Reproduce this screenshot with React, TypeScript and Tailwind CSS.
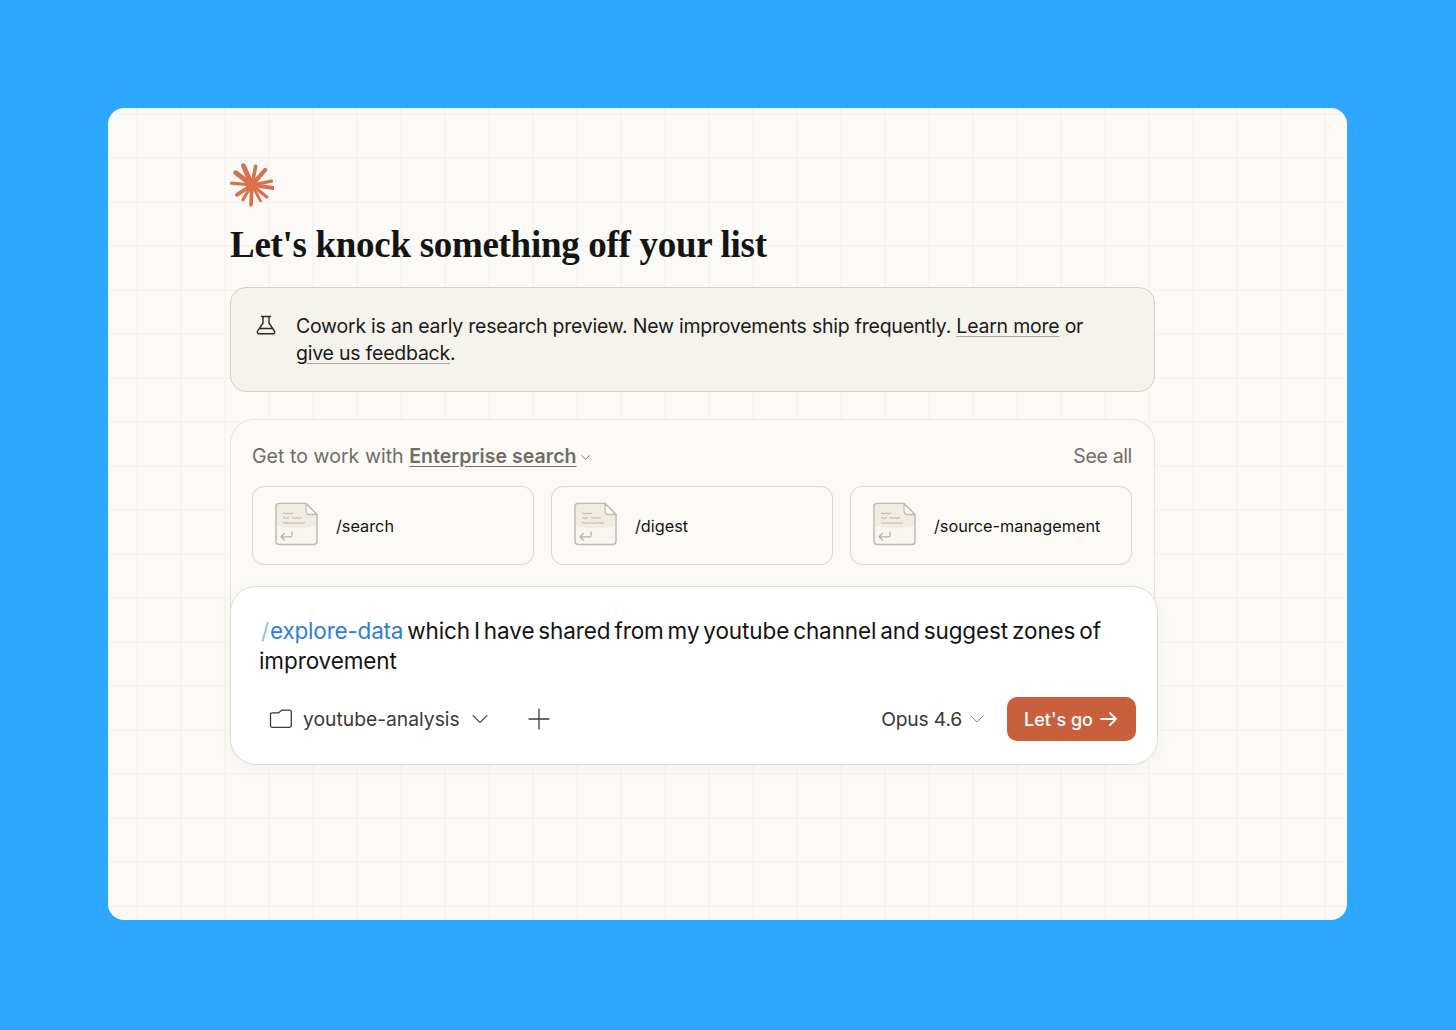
import { ChevronDown, Plus } from "lucide-react";

const SANS = "font-['Inter','Liberation_Sans',sans-serif]";

function Spark() {
  const rays: [number, number, number][] = [
    [-114, 21, 4.8], [-79, 19, 3.6], [-49, 20, 4.2], [-11, 20, 3.2], [8, 21.5, 4], [39, 19, 3.2],
    [62, 18, 2.8], [93, 20, 3.6], [122, 17.5, 3], [147, 18, 3.8], [-175, 20.5, 3.2], [-143, 20.5, 4.8],
  ];
  return (
    <svg width="44" height="44" viewBox="-22 -22 44 44" className="block">
      {rays.map(([a, l, w], i) => (
        <line key={i} x1="0" y1="0" x2={l * Math.cos((a * Math.PI) / 180)} y2={l * Math.sin((a * Math.PI) / 180)} stroke="#d9704e" strokeWidth={w} strokeLinecap="round" />
      ))}
      <circle r="6" fill="#d9704e" />
    </svg>
  );
}

function Flask() {
  return (
    <svg width="22" height="22" viewBox="0 0 22 22" fill="none" stroke="#2b2a27" strokeWidth="1.4" strokeLinejoin="round" strokeLinecap="round">
      <path d="M6.500 2.500h9M8 2.500v6.500L2.600 17.200c-.8 1.200 0 2.600 1.400 2.600h14c1.400 0 2.200-1.400 1.400-2.600L14 9V2.500" />
      <path d="M4.600 14.500h12.800" />
    </svg>
  );
}

function Folder() {
  return (
    <svg width="24" height="20" viewBox="0 0 24 20" fill="none" stroke="#3a3935" strokeWidth="1.3" strokeLinejoin="round">
      <path d="M1.500 5.500v11c0 1 .8 1.800 1.800 1.800h17.200c1 0 1.800-.8 1.800-1.800V3c0-1-.8-1.800-1.800-1.800h-7.300c-.6 0-1 .3-1.400.7L9.600 3.800H3.300c-1 0-1.800.7-1.800 1.700z" />
    </svg>
  );
}

function Doc() {
  return (
    <svg width="44" height="44" viewBox="0 0 44 44" fill="none" className="-mt-[4px] shrink-0">
      <path d="M4 1.500h27l11 11V39c0 2-1.500 3.500-3.500 3.500h-34C2.500 42.500 1 41 1 39V4.500C1 2.800 2.300 1.500 4 1.500z" fill="#f8f6f1" stroke="#bdbab1" strokeWidth="1.500" />
      <path d="M2 4.500c0-1.500 1-2 2-2h26v9.500l11 1V24c-12 3-27 3-39 0z" fill="#f0ece3" />
      <path d="M31 1.500V9c0 2 1.500 3.500 3.500 3.500H42z" fill="#faf9f5" stroke="#bdbab1" strokeWidth="1.300" strokeLinejoin="round" />
      <path d="M8 11.500q1-1 2 0t2 0 2 0 2 0 2 0M8 16q1-1 2 0t2 0 2 0M17 16q1-1 2 0t2 0 2 0 2 0 2 0M8 21q1-1 2 0t2 0 2 0 2 0 2 0 2 0 2 0 2 0 2 0 2 0 2 0" stroke="#b5b0a5" strokeWidth="0.900" />
      <path d="M17 30v3.500c0 .8-.6 1.300-1.300 1.300H6M9.500 31.500 6 34.800l3.500 3.300" stroke="#b5b2a9" strokeWidth="1.300" strokeLinecap="round" strokeLinejoin="round" />
    </svg>
  );
}

function Skill({ name }: { name: string }) {
  return (
    <div className="flex h-[79px] flex-1 items-center gap-[17px] rounded-[12px] border border-[#d9d7cf] pl-[22px]">
      <Doc />
      <span className="pt-[1px] text-[16.3px] text-[#141413]">{name}</span>
    </div>
  );
}

export default function App() {
  return (
    <div className={`flex h-[1030px] w-[1456px] items-start bg-[#2ea8ff] pl-[108px] pt-[108px] ${SANS}`}>
      <div className="h-[812px] w-[1239px] rounded-[16px] bg-[#fbfaf6] bg-[linear-gradient(#f6f5f0_2px,transparent_2px),linear-gradient(90deg,#f6f5f0_2px,transparent_2px)] bg-[size:44px_44px] bg-[position:28px_5px] pl-[122px] pt-[55px]">
        <div className="w-[925px]">
          <Spark />
          <h1 className="mt-[13px] font-['Liberation_Serif',serif] text-[37px] font-bold leading-[50px] tracking-[-0.3px] text-[#141413]">
            Let's knock something off your list
          </h1>
          <div className="mt-[17px] flex h-[105px] gap-[19px] rounded-[16px] border border-[#d3d1c8] bg-[#f4f3ec] pl-[24px] pt-[25px] text-[19.5px] leading-[27px] text-[#1b1a18]">
            <div className="pt-[1px]"><Flask /></div>
            <p className="w-[815px] tracking-[-0.23px]">
              Cowork is an early research preview. New improvements ship frequently.{" "}
              <span className="underline decoration-[#a8a69e] underline-offset-[3px]">Learn more</span> or{" "}
              <span className="underline decoration-[#a8a69e] underline-offset-[3px]">give us feedback</span>.
            </p>
          </div>
          <div className="mt-[27px] h-[190px] rounded-t-[24px] border border-b-0 border-[#e6e4dd] bg-[#fbfaf6] pl-[21px] pr-[22px] pt-[22px]">
            <div className="flex h-[30px] items-center justify-between text-[19.5px] tracking-[0.05px] text-[#6f6d66]">
              <div className="flex items-center">
                <span>Get to work with&nbsp;</span>
                <span className="font-semibold underline underline-offset-[3px]">Enterprise search</span>
                <ChevronDown size={15} strokeWidth={1.5} className="ml-[1px]" />
              </div>
              <span className="tracking-[-0.35px]">See all</span>
            </div>
            <div className="mt-[14px] flex gap-[17px]">
              <Skill name="/search" />
              <Skill name="/digest" />
              <Skill name="/source-management" />
            </div>
          </div>
          <div className="relative -mt-[23px] h-[179px] w-[928px] rounded-[26px] border border-[#dedcd5] bg-white pl-[28px] pr-[21px] pt-[29px] shadow-[0_4px_24px_rgba(0,0,0,0.04)]">
            <p className="text-[22.5px] leading-[30px] tracking-[-0.1px] text-[#141413] [word-spacing:-2.3px]">
              <span className="ml-[2px] mr-[1px] text-[#8fbde8]">/</span>
              <span className="tracking-[-0.2px] text-[#2f7fd4]">explore-data</span> which I have shared from my youtube channel and suggest zones of improvement
            </p>
            <div className="mt-[21px] flex h-[44px] items-center text-[19.3px] text-[#3a3935]">
              <div className="ml-[10px]"><Folder /></div>
              <span className="ml-[10px]">youtube-analysis</span>
              <ChevronDown size={28} strokeWidth={1} className="ml-[6px] text-[#55534d]" />
              <Plus size={34} strokeWidth={0.9} className="ml-[28px]" />
              <span className="ml-auto tracking-[-0.2px]">Opus 4.6</span>
              <ChevronDown size={24} strokeWidth={1} className="ml-[3px] text-[#8c8a83]" />
              <button className="ml-[18px] flex h-[44px] w-[129px] items-center justify-center gap-[7px] rounded-[10px] bg-[#c8603e] pr-[2px] text-[18px] font-medium text-white">
                Let's go
                <svg width="17" height="14" viewBox="0 0 17 14" fill="none" stroke="currentColor" strokeWidth="1.8" strokeLinecap="round" strokeLinejoin="round">
                  <path d="M1 7h15M10 1l6 6-6 6" />
                </svg>
              </button>
            </div>
          </div>
        </div>
      </div>
    </div>
  );
}
